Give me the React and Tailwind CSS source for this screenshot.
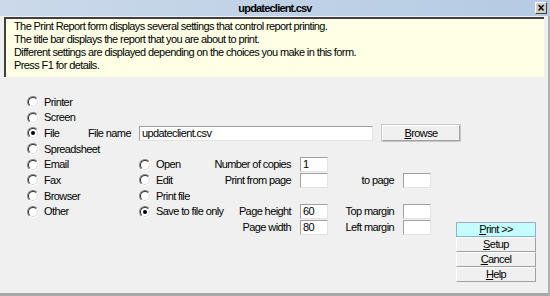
import React, { useState } from "react";

function Radio({ checked, label, className = "" }) {
  return (
    <div className={`flex items-center shrink-0 ${className}`}>
      <span className="w-[12px] h-[12px] rounded-full border border-t-[#808080] border-l-[#808080] border-r-white border-b-white shrink-0">
        <span className="w-full h-full rounded-full bg-white border border-t-[#303030] border-l-[#303030] border-r-[#dcdcdc] border-b-[#dcdcdc] flex items-center justify-center">
          {checked && <span className="w-[4px] h-[4px] rounded-full bg-black" />}
        </span>
      </span>
      <span className="ml-[5px] whitespace-nowrap">{label}</span>
    </div>
  );
}

function Field({ value = "", className = "w-[28px]" }) {
  return (
    <div className={`h-[15px] shrink-0 bg-white border border-t-[#a0a0a0] border-l-[#a0a0a0] border-r-[#e3e3e3] border-b-[#e3e3e3] pl-[2px] leading-[13px] whitespace-nowrap ${className}`}>
      {value}
    </div>
  );
}

function Btn({ first, rest, active }) {
  return (
    <div
      className={`h-[15px] flex items-center justify-center border leading-[13px] ${
        active ? "bg-[#c4fcff] border-[#8fb0c8]" : "bg-[#f0f0f0] border-t-white border-l-white border-r-[#a0a0a0] border-b-[#a0a0a0]"
      }`}
    >
      <span>
        <span className="underline">{first}</span>
        {rest}
      </span>
    </div>
  );
}

export default function App() {
  const [dest] = useState("File");
  const [mode] = useState("Save");

  return (
    <div className="w-[550px] h-[296px] bg-[#f0f0f0] flex flex-col text-[11px] tracking-[-0.6px] text-black font-['Liberation_Sans',Arial,sans-serif] overflow-hidden">
      {/* title bar */}
      <div className="h-[16px] relative flex items-center justify-center bg-gradient-to-r from-[#cbd9ea] to-[#b5cbe3]">
        <span className="font-bold text-[11px] tracking-[-0.8px]">updateclient.csv</span>
        <span className="absolute right-[3px] top-[2px] w-[12px] h-[12px] bg-[#d4d0c8] border border-t-white border-l-white border-r-[#404040] border-b-[#404040] flex items-center justify-center text-[12px] font-bold leading-none tracking-normal">
          ×
        </span>
      </div>

      <div className="flex-1 flex flex-col border-r-2 border-r-[#b0b0b0] border-b-[3px] border-b-[#a8a8a8]">
        {/* description */}
        <div className="mx-[4px] mt-[1px] h-[60px] bg-[#ffffe6] border-t-2 border-l-2 border-t-[#404040] border-l-[#404040] pl-[8px] pt-[1px] leading-[13px]">
          <p>The Print Report form displays several settings that control report printing.</p>
          <p>The title bar displays the report that you are about to print.</p>
          <p>Different settings are displayed depending on the choices you make in this form.</p>
          <p>Press F1 for details.</p>
        </div>

        <div className="flex">
          <div className="w-[456px] shrink-0 pl-[27px] pt-[17px] flex flex-col">
            <div className="h-[15.7px] flex items-center">
              <Radio label="Printer" checked={dest === "Printer"} />
            </div>
            <div className="h-[15.7px] flex items-center">
              <Radio label="Screen" checked={dest === "Screen"} />
            </div>
            <div className="h-[15.7px] flex items-center">
              <Radio label="File" checked={dest === "File"} className="w-[61px]" />
              <span className="w-[51px] shrink-0 whitespace-nowrap">File name</span>
              <Field value="updateclient.csv" className="w-[234px]" />
              <div className="ml-[9px] w-[78px] h-[16px] shrink-0 flex items-center justify-center bg-[#f0f0f0] border border-t-white border-l-white border-r-[#a0a0a0] border-b-[#a0a0a0] outline outline-1 outline-[#c8c8c8]">
                <span>
                  <span className="underline">B</span>rowse
                </span>
              </div>
            </div>
            <div className="h-[15.7px] flex items-center">
              <Radio label="Spreadsheet" checked={dest === "Spreadsheet"} />
            </div>
            <div className="h-[15.7px] flex items-center">
              <Radio label="Email" checked={dest === "Email"} className="w-[112px]" />
              <div className="w-[152px] shrink-0 flex items-center">
                <Radio label="Open" checked={mode === "Open"} />
                <span className="ml-auto whitespace-nowrap">Number of copies</span>
              </div>
              <Field value="1" className="ml-[9px] w-[28px]" />
            </div>
            <div className="h-[15.7px] flex items-center">
              <Radio label="Fax" checked={dest === "Fax"} className="w-[112px]" />
              <div className="w-[152px] shrink-0 flex items-center">
                <Radio label="Edit" checked={mode === "Edit"} />
                <span className="ml-auto whitespace-nowrap">Print from page</span>
              </div>
              <Field className="ml-[9px] w-[28px]" />
              <span className="w-[66px] shrink-0 text-right whitespace-nowrap">to page</span>
              <Field className="ml-[9px] w-[28px]" />
            </div>
            <div className="h-[15.7px] flex items-center">
              <Radio label="Browser" checked={dest === "Browser"} className="w-[112px]" />
              <Radio label="Print file" checked={mode === "Print"} />
            </div>
            <div className="h-[15.7px] flex items-center">
              <Radio label="Other" checked={dest === "Other"} className="w-[112px]" />
              <div className="w-[152px] shrink-0 flex items-center">
                <Radio label="Save to file only" checked={mode === "Save"} />
                <span className="ml-auto whitespace-nowrap">Page height</span>
              </div>
              <Field value="60" className="ml-[9px] w-[28px]" />
              <span className="w-[66px] shrink-0 text-right whitespace-nowrap">Top margin</span>
              <Field className="ml-[9px] w-[28px]" />
            </div>
            <div className="h-[15.7px] flex items-center">
              <div className="w-[112px] shrink-0" />
              <div className="w-[152px] shrink-0 flex items-center">
                <span className="ml-auto whitespace-nowrap">Page width</span>
              </div>
              <Field value="80" className="ml-[9px] w-[28px]" />
              <span className="w-[66px] shrink-0 text-right whitespace-nowrap">Left margin</span>
              <Field className="ml-[9px] w-[28px]" />
            </div>
          </div>

          <div className="w-[80px] pt-[145px] flex flex-col">
            <Btn first="P" rest="rint >>" active />
            <Btn first="S" rest="etup" />
            <Btn first="C" rest="ancel" />
            <Btn first="H" rest="elp" />
          </div>
        </div>
      </div>
    </div>
  );
}
